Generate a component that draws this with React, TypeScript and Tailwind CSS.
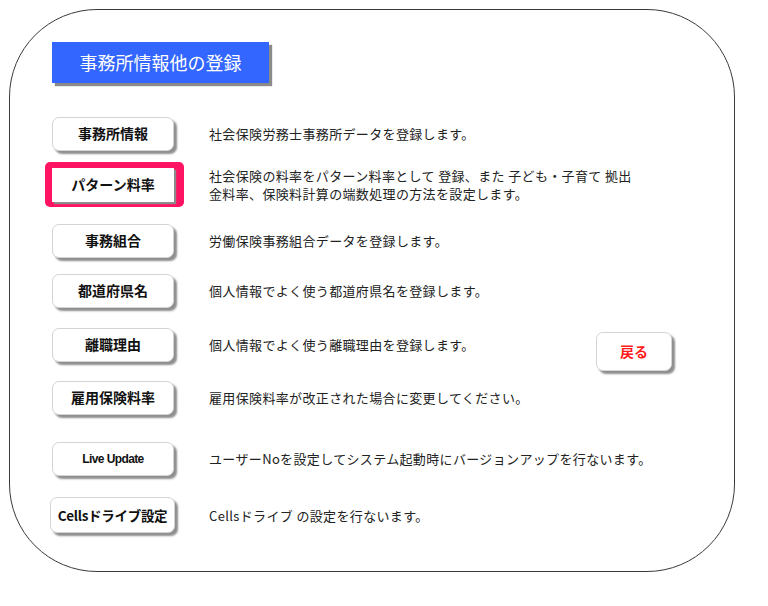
import React from 'react';

type Row = {
  label: string;
  desc: string[];
  top: string;
  height: string;
  highlight?: boolean;
  labelClass?: string;
  btnClass?: string;
  back?: boolean;
};

const rows: Row[] = [
  { label: '事務所情報', desc: ['社会保険労務士事務所データを登録します。'], top: 'mt-[32px]', height: 'h-[37px]' },
  {
    label: 'パターン料率',
    desc: ['社会保険の料率をパターン料率として 登録、また 子ども・子育て 拠出', '金料率、保険料計算の端数処理の方法を設定します。'],
    top: 'mt-[10px]',
    height: 'h-[45px]',
    highlight: true,
  },
  { label: '事務組合', desc: ['労働保険事務組合データを登録します。'], top: 'mt-[15px]', height: 'h-[37px]' },
  { label: '都道府県名', desc: ['個人情報でよく使う都道府県名を登録します。'], top: 'mt-[13px]', height: 'h-[37px]' },
  { label: '離職理由', desc: ['個人情報でよく使う離職理由を登録します。'], top: 'mt-[17px]', height: 'h-[37px]', back: true },
  { label: '雇用保険料率', desc: ['雇用保険料率が改正された場合に変更してください。'], top: 'mt-[16px]', height: 'h-[37px]' },
  {
    label: 'Live Update',
    desc: ['ユーザーNoを設定してシステム起動時にバージョンアップを行ないます。'],
    top: 'mt-[24px]',
    height: 'h-[37px]',
    labelClass: "text-[12px] tracking-[-0.6px] font-['Liberation_Sans',sans-serif]",
  },
  {
    label: 'Cellsドライブ設定',
    desc: ['Cellsドライブ の設定を行ないます。'],
    top: 'mt-[19px]',
    height: 'h-[38px]',
    btnClass: 'ml-[5px] w-[125px] h-[36px]',
    labelClass: 'text-[13.5px] tracking-[-0.3px]',
  },
];

const MenuButton = ({ row }: { row: Row }) => {
  if (row.highlight) {
    return (
      <div className="w-[139px] h-[45px] rounded-[5px] bg-[#ff1464] flex items-center pl-[7px]">
        <div className="w-[122px] h-[34px] bg-white shadow-[2px_2px_1px_#8c8c8c] flex items-center justify-center text-[14px] font-bold text-[#111]">
          {row.label}
        </div>
      </div>
    );
  }
  return (
    <div
      className={`${row.btnClass ?? 'ml-[7px] w-[122px] h-[34px]'} rounded-[7px] border border-[#d4d4d4] bg-white shadow-[3px_3px_2px_#8f8f8f] flex items-center justify-center font-bold text-[#111] ${row.labelClass ?? 'text-[14px]'}`}
    >
      {row.label}
    </div>
  );
};

export default function App() {
  return (
    <div className="w-[768px] h-[606px] bg-white pl-[9px] pt-[9px] font-['Noto_Sans_CJK_JP',sans-serif]">
      <div className="w-[726px] h-[563px] rounded-[88px] border border-[#3a3a3a] pl-[35px] pt-[32px] flex flex-col">
        <div className="ml-[7px] w-[217px] h-[41px] bg-[#3366ff] shadow-[3px_3px_1px_#8a8a8a] flex items-center justify-center text-white text-[18px]">
          事務所情報他の登録
        </div>
        {rows.map((row) => (
          <div key={row.label} className={`${row.top} ${row.height} flex items-center`}>
            <div className="w-[164px] shrink-0">
              <MenuButton row={row} />
            </div>
            <div className={`${row.back ? 'w-[387px]' : ''} text-[13px] tracking-[0.35px] leading-[18px] text-[#222] pt-[1px]`}>
              {row.desc.map((line) => (
                <div key={line} className="whitespace-nowrap">{line}</div>
              ))}
            </div>
            {row.back && (
              <div className="mt-[14px] w-[76px] h-[39px] rounded-[7px] border border-[#d4d4d4] bg-white shadow-[3px_3px_2px_#8f8f8f] flex items-center justify-center text-[14px] font-bold text-[#ff1a1a]">
                戻る
              </div>
            )}
          </div>
        ))}
      </div>
    </div>
  );
}
